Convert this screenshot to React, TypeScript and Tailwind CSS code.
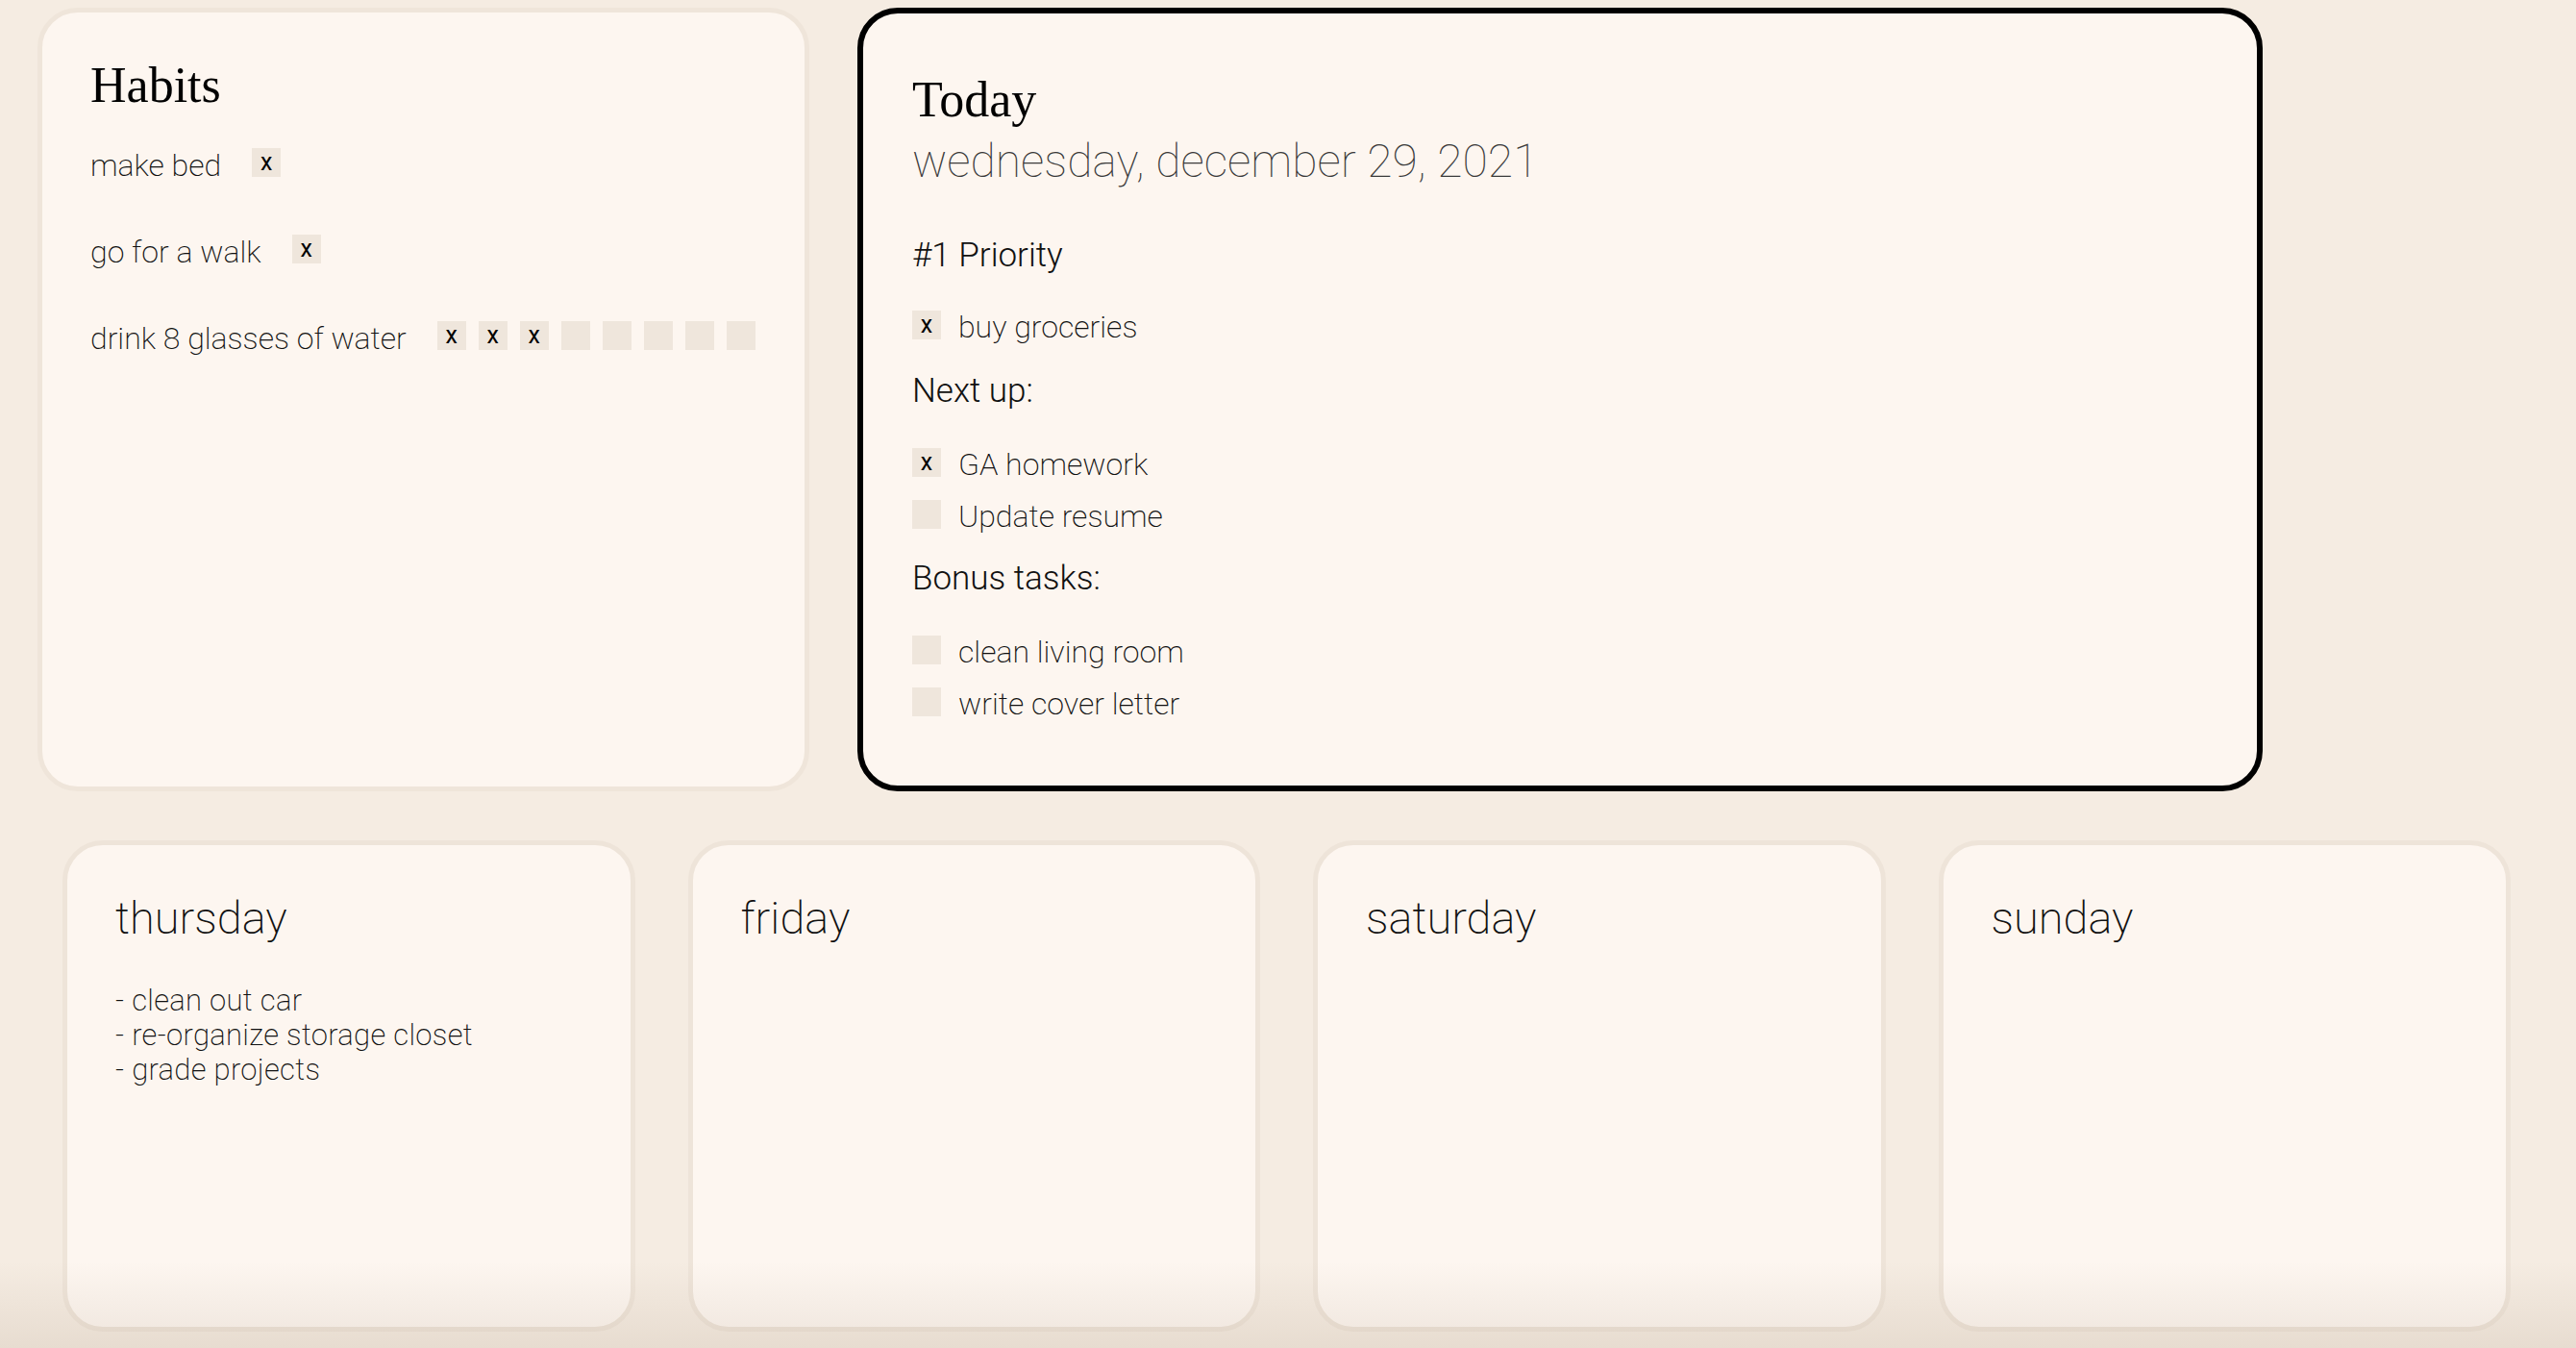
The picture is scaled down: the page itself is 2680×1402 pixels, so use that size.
import React from 'react';

type Task = { label: string; done: boolean };

const habits: { name: string; marks: boolean[] }[] = [
  { name: 'make bed', marks: [true] },
  { name: 'go for a walk', marks: [true] },
  { name: 'drink 8 glasses of water', marks: [true, true, true, false, false, false, false, false] },
];

const priority: Task[] = [{ label: 'buy groceries', done: true }];
const nextUp: Task[] = [
  { label: 'GA homework', done: true },
  { label: 'Update resume', done: false },
];
const bonus: Task[] = [
  { label: 'clean living room', done: false },
  { label: 'write cover letter', done: false },
];

const week: { day: string; notes: string[] }[] = [
  { day: 'thursday', notes: ['- clean out car', '- re-organize storage closet', '- grade projects'] },
  { day: 'friday', notes: [] },
  { day: 'saturday', notes: [] },
  { day: 'sunday', notes: [] },
];

function Box({ checked }: { checked: boolean }) {
  return (
    <span className="flex h-[30px] w-[30px] shrink-0 items-center justify-center bg-[#efe6dc] pb-[2px] font-['Roboto',sans-serif] text-[25px] leading-none text-black">
      {checked ? 'x' : ''}
    </span>
  );
}

function TaskRow({ task }: { task: Task }) {
  return (
    <div className="flex items-end gap-[18px]">
      <div className="mb-[5px]">
        <Box checked={task.done} />
      </div>
      <span className="text-[32px] font-extralight leading-[36px] text-[#111]">{task.label}</span>
    </div>
  );
}

function Heading({ children }: { children: React.ReactNode }) {
  return <h3 className="text-[35px] font-light leading-[38px] text-[#111]">{children}</h3>;
}

export default function App() {
  return (
    <div className="relative h-[1402px] w-full overflow-hidden bg-[#f5ece2] font-['Roboto',sans-serif] text-[#111]">
      {/* top row */}
      <div className="flex gap-[50px] pl-[39px] pt-[8px]">
        {/* Habits */}
        <section className="h-[815px] w-[803px] rounded-[42px] border-[5px] border-[#efe5da] bg-[#fdf6f0] pl-[50px] pt-[46px]">
          <h1 className="font-['Liberation_Serif',serif] text-[52px] font-normal leading-[60px] text-black">Habits</h1>
          <div className="mt-[35px] flex flex-col gap-[54px]">
            {habits.map((h) => (
              <div key={h.name} className="flex items-end">
                <span className="text-[32px] font-extralight leading-[36px] text-[#111]">{h.name}</span>
                <div className="mb-[6px] ml-[32px] flex gap-[13px]">
                  {h.marks.map((m, i) => (
                    <Box key={i} checked={m} />
                  ))}
                </div>
              </div>
            ))}
          </div>
        </section>

        {/* Today */}
        <section className="h-[815px] w-[1462px] rounded-[42px] border-[6px] border-black bg-[#fdf6f0] pl-[51px] pt-[60px]">
          <h1 className="font-['Liberation_Serif',serif] text-[52px] font-normal leading-[60px] text-black">Today</h1>
          <p className="mt-[7px] text-[48px] font-thin leading-[54px] text-[#3a3a3a]">wednesday, december 29, 2021</p>

          <div className="mt-[52px]">
            <Heading>#1 Priority</Heading>
            <div className="mt-[37px] flex flex-col gap-[18px]">
              {priority.map((t) => (
                <TaskRow key={t.label} task={t} />
              ))}
            </div>
          </div>

          <div className="mt-[30px]">
            <Heading>Next up:</Heading>
            <div className="mt-[39px] flex flex-col gap-[18px]">
              {nextUp.map((t) => (
                <TaskRow key={t.label} task={t} />
              ))}
            </div>
          </div>

          <div className="mt-[28px]">
            <Heading>Bonus tasks:</Heading>
            <div className="mt-[39px] flex flex-col gap-[18px]">
              {bonus.map((t) => (
                <TaskRow key={t.label} task={t} />
              ))}
            </div>
          </div>
        </section>
      </div>

      {/* week */}
      <div className="mt-[51px] grid w-[2612px] grid-cols-4 gap-[55px] pl-[65px]">
        {week.map((d) => (
          <section
            key={d.day}
            className="h-[511px] rounded-[42px] border-[5px] border-[#eee4d9] bg-[#fdf6f0] pl-[50px] pt-[49px]"
          >
            <h2 className="text-[47px] font-extralight leading-[54px] text-[#111]">{d.day}</h2>
            {d.notes.length > 0 && (
              <ul className="mt-[41px]">
                {d.notes.map((n) => (
                  <li key={n} className="text-[31px] font-extralight leading-[36px] tracking-[0.3px] text-[#111]">
                    {n}
                  </li>
                ))}
              </ul>
            )}
          </section>
        ))}
      </div>

      {/* soft shade along the bottom edge */}
      <div className="pointer-events-none absolute inset-x-0 bottom-0 h-[90px] bg-gradient-to-b from-transparent to-[rgba(110,80,50,0.1)]" />
    </div>
  );
}
